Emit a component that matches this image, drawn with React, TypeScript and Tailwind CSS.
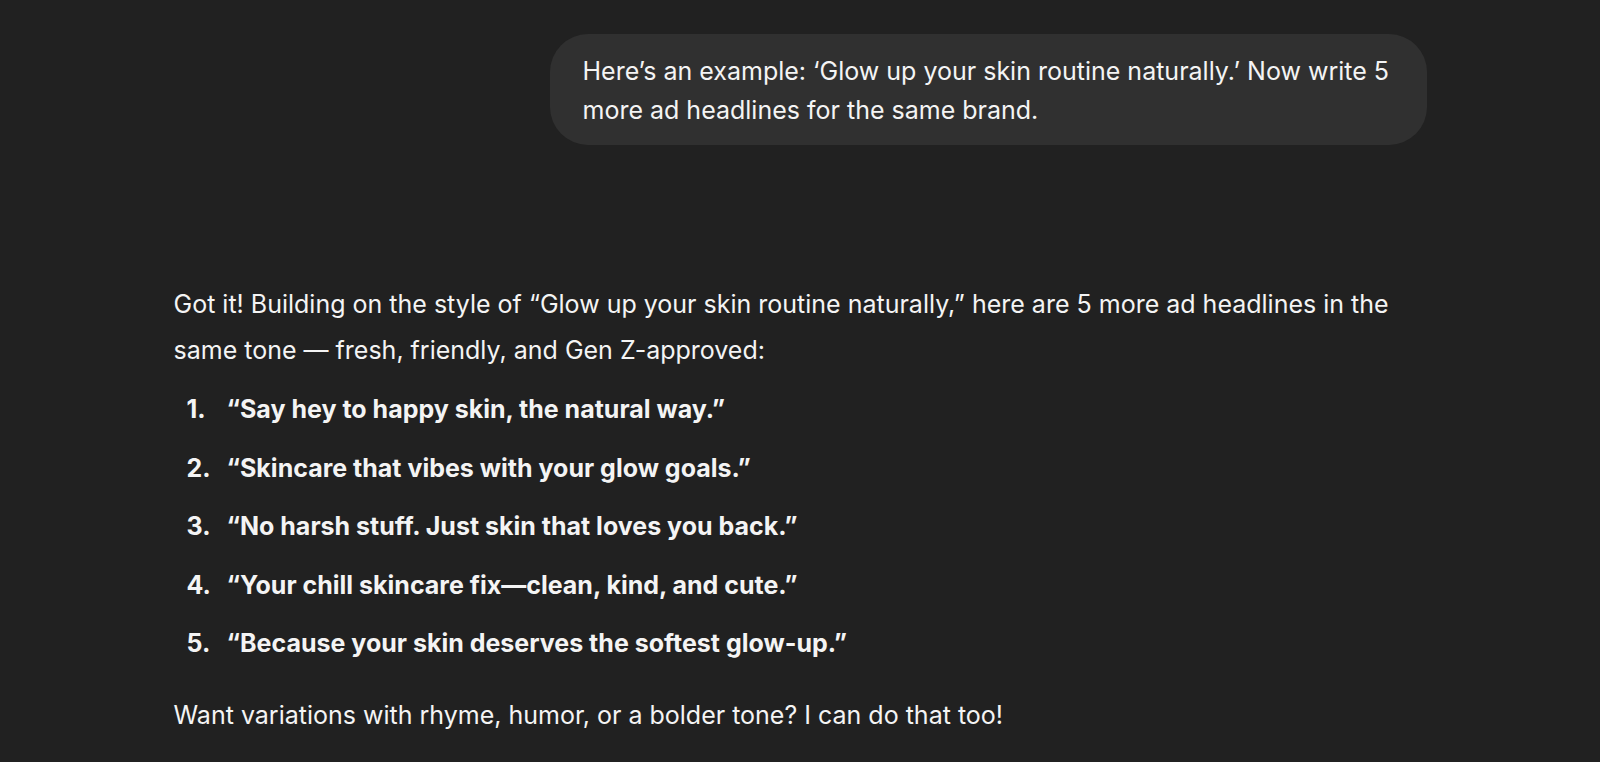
const headlines = [
  '“Say hey to happy skin, the natural way.”',
  '“Skincare that vibes with your glow goals.”',
  '“No harsh stuff. Just skin that loves you back.”',
  '“Your chill skincare fix—clean, kind, and cute.”',
  '“Because your skin deserves the softest glow-up.”',
]

export default function App() {
  return (
    <div className="min-h-screen bg-[#212121] text-[#f4f4f4] font-['Inter',sans-serif] overflow-hidden">
      <div className="w-[1253px] mx-auto pt-[34px]">
        {/* user message */}
        <div className="flex justify-end">
          <div className="w-[877px] bg-[#303030] rounded-[38px] pl-[33px] pr-[28px] pt-[18px] pb-[16px] text-[25px] leading-[38.5px]">
            Here’s an example: ‘Glow up your skin routine naturally.’ Now write 5 more ad headlines for the same brand.
          </div>
        </div>

        {/* assistant message */}
        <div className="mt-[136px] text-[25px] leading-[46px]">
          <p>
            Got it! Building on the style of “Glow up your skin routine naturally,” here are 5 more ad headlines in the same tone — fresh, friendly, and Gen Z-approved:
          </p>
          <ol className="mt-[13px] flex flex-col gap-[12.5px]">
            {headlines.map((h, i) => (
              <li key={i} className="flex font-bold">
                <span className="w-[40px] pl-[13px] box-content shrink-0">{i + 1}.</span>
                <span>{h}</span>
              </li>
            ))}
          </ol>
          <p className="mt-[26px]">Want variations with rhyme, humor, or a bolder tone? I can do that too!</p>
        </div>
      </div>
    </div>
  )
}
